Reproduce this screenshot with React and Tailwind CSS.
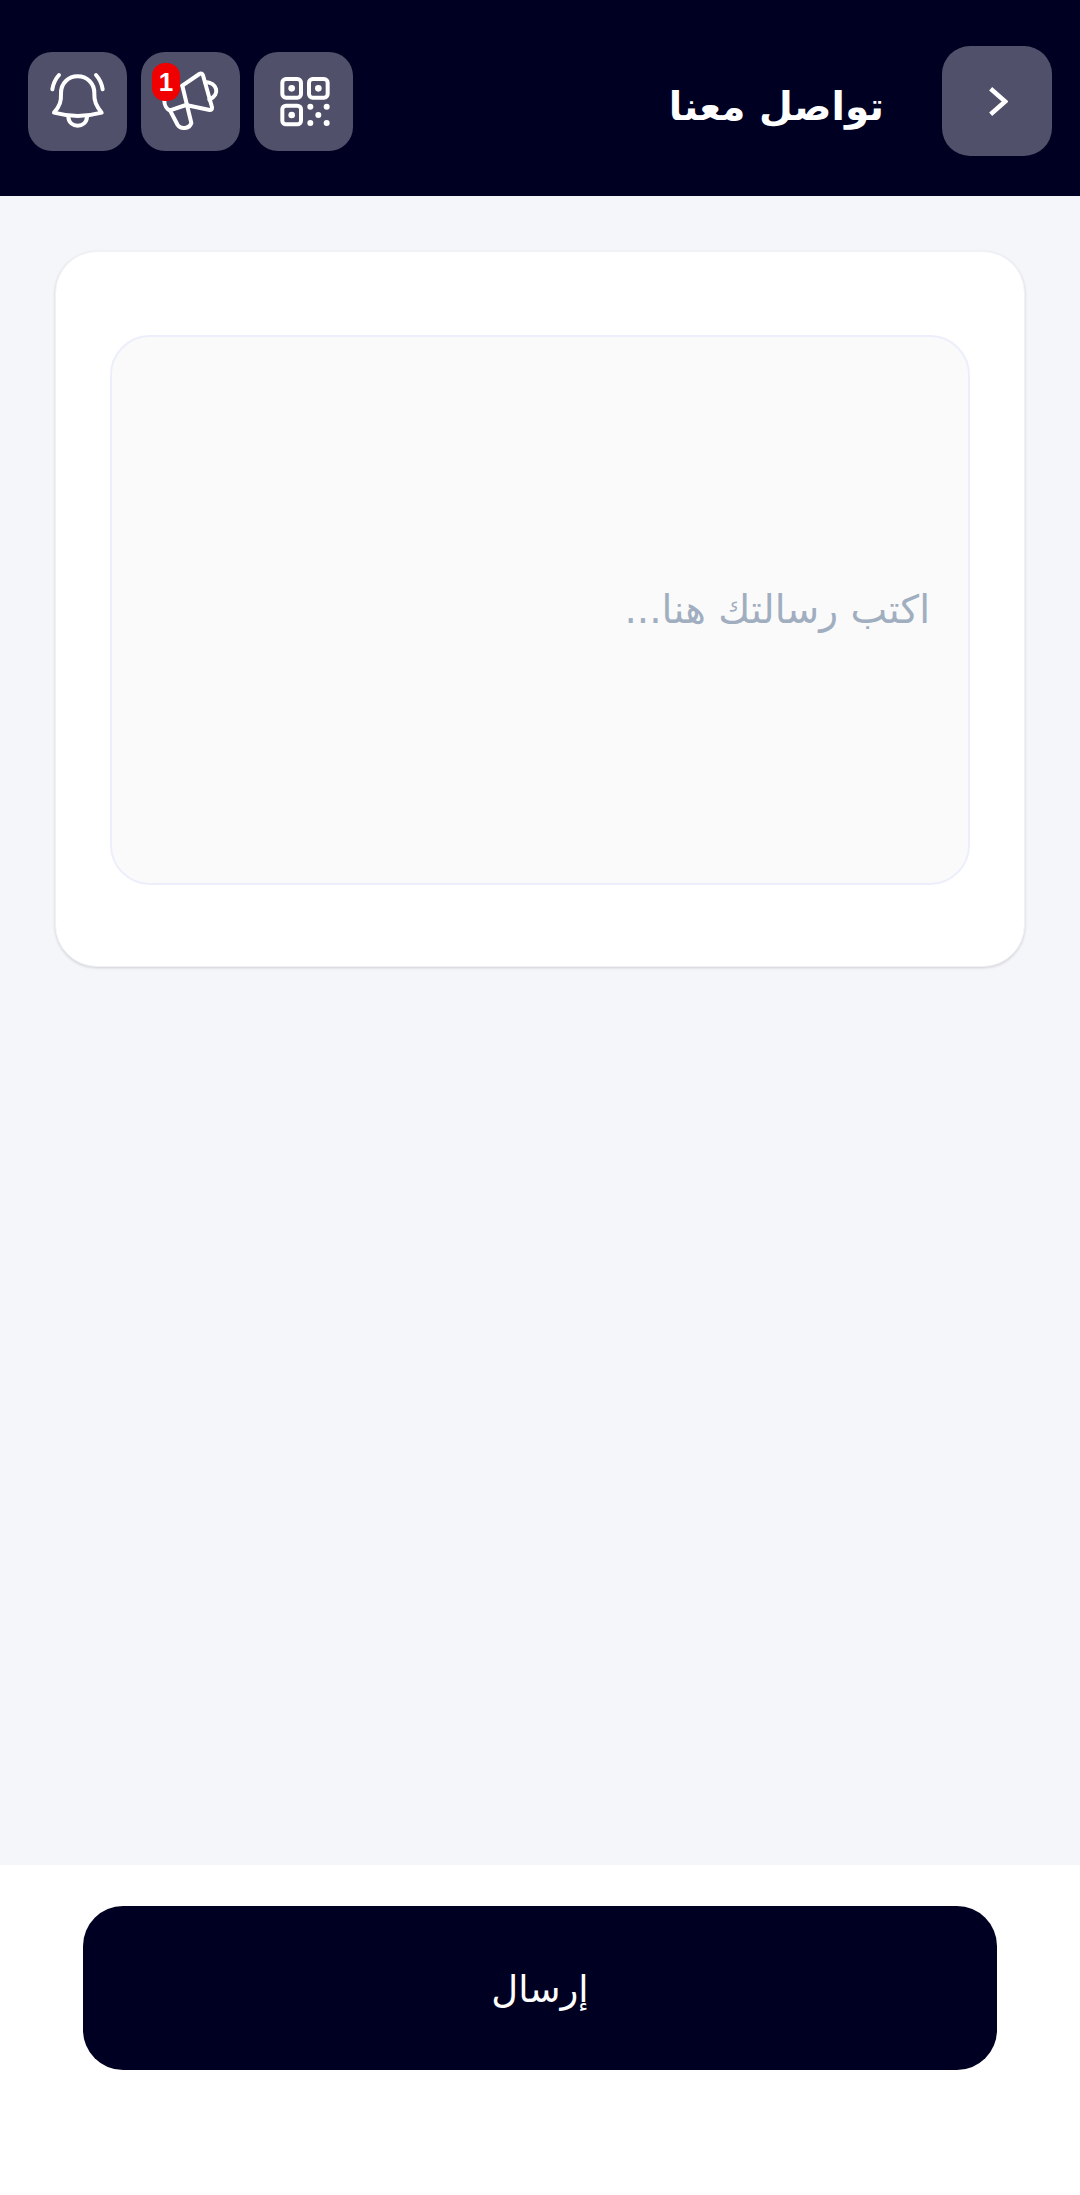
import React from 'react';

const BellIcon = () => (
  <svg viewBox="133 145 198 198" className="w-[66px] h-[66px]" fill="none" stroke="white" strokeWidth="12" strokeLinecap="round" strokeLinejoin="round">
    <path d="M160 279 C178 258 182 244 181 222 C180 190 204 170 231 170 C258 170 282 190 281 222 C280 244 286 258 303 279 C255 292 208 292 160 279 Z" />
    <path d="M203 292 C206 327 256 327 259 292" />
    <path d="M155 209 C158 190 164 178 175 166" />
    <path d="M306 209 C303 190 297 178 286 166" />
  </svg>
);

const MegaphoneIcon = () => (
  <svg viewBox="472 145 198 198" className="w-[66px] h-[66px]" fill="none" stroke="white" strokeWidth="12" strokeLinecap="round" strokeLinejoin="round">
    <path d="M545 198 L596 163 C601 160 605 162 607 167 L634 263 C635 268 632 271 627 271 L556 256 L508 272 C498 268 491 256 491 243" />
    <path d="M613 187 C650 188 660 225 626 240" />
    <path d="M508 272 L531 316 C540 330 566 328 572 310 L545 198" />
  </svg>
);

const QrIcon = () => (
  <svg viewBox="811 145 198 198" className="w-[66px] h-[66px]" fill="none" stroke="white" strokeWidth="12" strokeLinejoin="round">
    <rect x="845" y="178" width="56" height="56" rx="11" />
    <rect x="925" y="178" width="56" height="56" rx="11" />
    <rect x="845" y="258" width="56" height="56" rx="11" />
    <g fill="white" stroke="none">
      <circle cx="873" cy="206" r="10" />
      <circle cx="953" cy="206" r="10" />
      <circle cx="873" cy="286" r="10" />
      <circle cx="929" cy="261" r="9" />
      <circle cx="978" cy="261" r="9" />
      <circle cx="953" cy="286" r="9" />
      <circle cx="929" cy="310" r="9" />
      <circle cx="978" cy="310" r="9" />
    </g>
  </svg>
);

const App = () => {
  return (
    <div dir="rtl" className="flex flex-col h-[2195px] bg-[#f5f6fa] font-['DejaVu_Sans',sans-serif]">
      {/* Header */}
      <div className="flex items-center justify-between h-[196px] shrink-0 bg-[#000022] px-[28px] pt-[6px]">
        <div className="flex items-center">
          <div className="flex items-center justify-center w-[110px] h-[110px] rounded-[28px] bg-[#50506a]">
            <svg viewBox="0 0 24 32" className="w-[22px] h-[29px]" fill="none" stroke="white" strokeWidth="5">
              <path d="M5 2 L21 16 L5 30" />
            </svg>
          </div>
          <div className="mr-[58px] pt-[13px] text-[39px] font-bold text-white">تواصل معنا</div>
        </div>
        <div dir="ltr" className="flex items-center gap-[14px]">
          <div className="flex items-center justify-center w-[99px] h-[99px] rounded-[24px] bg-[#50506a]">
            <BellIcon />
          </div>
          <div className="relative flex items-center justify-center w-[99px] h-[99px] rounded-[24px] bg-[#50506a]">
            <MegaphoneIcon />
            <div className="absolute left-[11px] top-[11px] flex items-center justify-center w-[28px] h-[38px] rounded-[13px] bg-[#f00000] text-[26px] font-bold leading-none text-white font-['Liberation_Sans',sans-serif]">1</div>
          </div>
          <div className="flex items-center justify-center w-[99px] h-[99px] rounded-[24px] bg-[#50506a]">
            <QrIcon />
          </div>
        </div>
      </div>

      {/* Main Content */}
      <div className="flex-1 px-[55px] pt-[55px]">
        <div className="h-[716px] rounded-[42px] border border-[#f1f1f6] bg-white p-[54px] pt-[83px] shadow-[0_1px_3px_rgba(0,0,0,0.16)]">
          <div className="flex items-center h-[550px] rounded-[40px] border-2 border-[#eceffb] bg-[#fafafb] px-[38px]">
            <span className="text-[39px] text-[#a0aec0]">اكتب رسالتك هنا...</span>
          </div>
        </div>
      </div>

      {/* Footer */}
      <div className="h-[330px] shrink-0 bg-white px-[83px] pt-[41px]">
        <button className="flex items-center justify-center w-full h-[164px] rounded-[40px] bg-[#000022] text-[37px] text-white font-['Open_Sans','DejaVu_Sans',sans-serif]">
          إرسال
        </button>
      </div>
    </div>
  );
};

export default App;
